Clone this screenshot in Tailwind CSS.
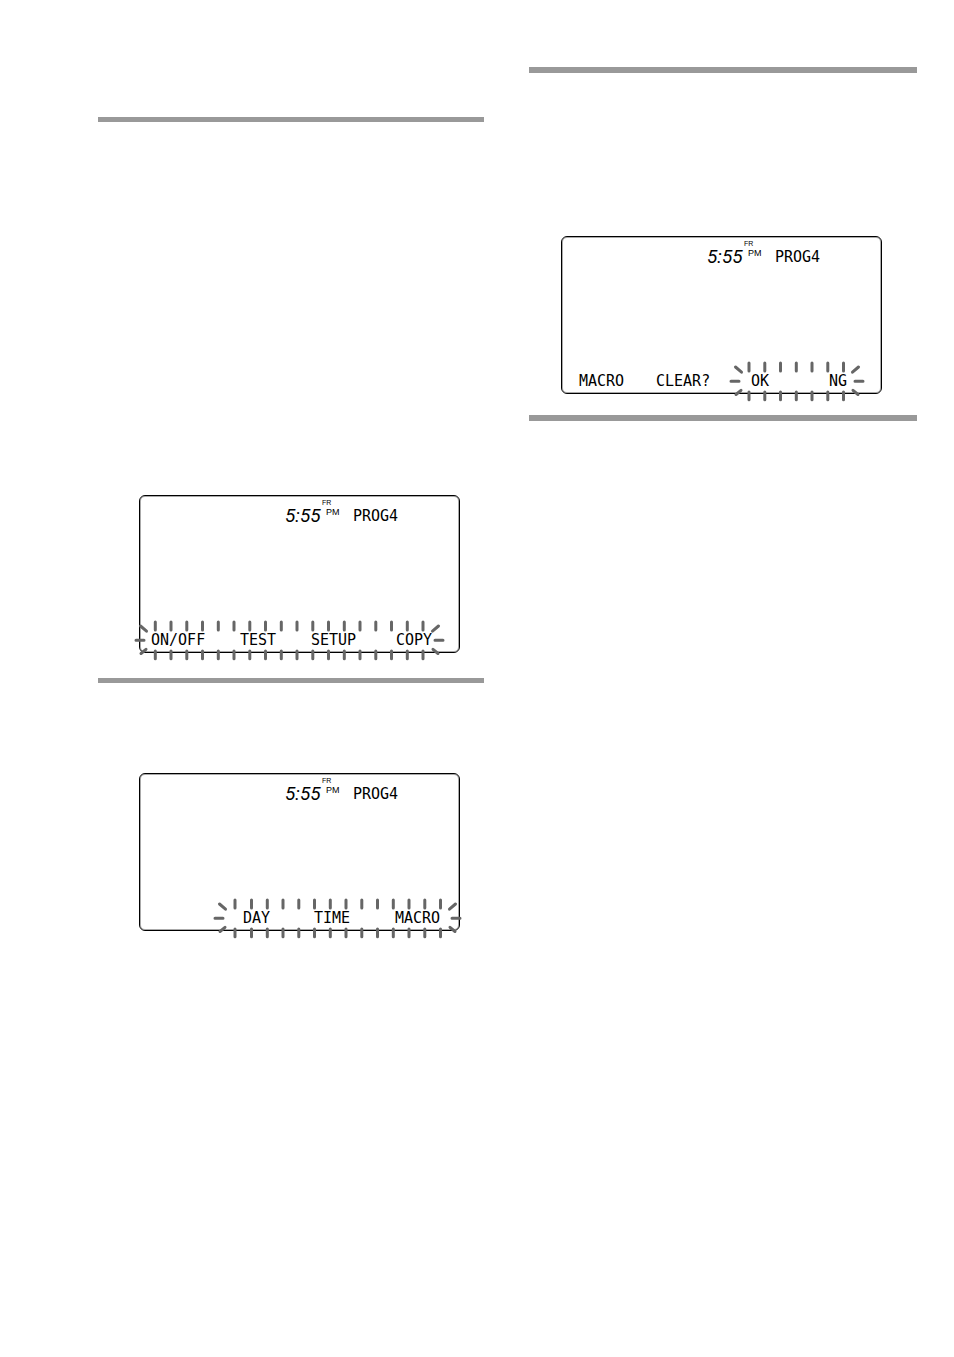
<!DOCTYPE html>
<html lang="en">
<head>
    <meta charset="UTF-8">
    <meta name="viewport" content="width=device-width, initial-scale=1.0">
    <title>Program Timer Displays</title>
    <script src="https://cdn.jsdelivr.net/npm/@tailwindcss/browser@4"></script>
</head>
<body class="min-h-screen bg-white text-black font-['DejaVu_Sans_Mono',monospace]">
    <!-- ray shapes around a flashing area -->
    <svg class="hidden">
        <defs>
            <g id="fan" stroke="#666" stroke-width="3" stroke-linecap="round">
                <path d="M7.5 10L13.5 15.2M3 24.3H11M8 37.5L13 33.3"/>
            </g>
            <path id="tick" d="M0 6V14M0 35V42.7" stroke="#666" stroke-width="3" stroke-linecap="round"/>
        </defs>
    </svg>

    <main class="grid grid-cols-[386fr_388fr] gap-[45px] pl-[98px] pr-[37px]">
        <div class="pt-[117px]">
            <hr class="h-[5px] border-0 bg-[#999]">

            <section class="relative mt-[373px] mr-6 ml-[41px] h-[158px] rounded-md border border-black inset-ring inset-ring-[#aaa]">
                <header class="flex items-start pl-[145px] pt-[7px]">
                    <time class="w-9 font-['Roboto',sans-serif] text-[19px] leading-[26px] italic">5:55</time>
                    <div class="w-8 font-['Liberation_Sans',sans-serif]">
                        <p class="-mt-1 pl-px text-[7px] leading-[8px]">FR</p>
                        <p class="pl-[5px] text-[9px] leading-[10px]">PM</p>
                    </div>
                    <span class="text-[15px] leading-[26px]">PROG4</span>
                </header>
                <div class="absolute bottom-0 left-[11px] flex h-6 items-center text-[15px] leading-6">
                    <button class="w-[89px] text-left">ON/OFF</button>
                    <button class="w-[71px] text-left">TEST</button>
                    <button class="w-[85px] text-left">SETUP</button>
                    <button>COPY</button>
                </div>
                <svg class="pointer-events-none absolute -bottom-3 -left-[7px]" width="314" height="48" viewBox="0 0 314 48" fill="none">
                    <use href="#fan"/>
                    <use href="#fan" transform="translate(313 0) scale(-1 1)"/>
                    <use href="#tick" x="22.3"/><use href="#tick" x="38"/><use href="#tick" x="53.8"/><use href="#tick" x="69.5"/><use href="#tick" x="85.3"/><use href="#tick" x="101"/>
                    <use href="#tick" x="116.8"/><use href="#tick" x="132.5"/><use href="#tick" x="148.3"/><use href="#tick" x="164"/><use href="#tick" x="179.8"/><use href="#tick" x="195.5"/>
                    <use href="#tick" x="211.3"/><use href="#tick" x="227"/><use href="#tick" x="242.8"/><use href="#tick" x="258.5"/><use href="#tick" x="274.3"/><use href="#tick" x="290"/>
                </svg>
            </section>

            <hr class="mt-[25px] h-[5px] border-0 bg-[#999]">

            <section class="relative mt-[90px] mr-6 ml-[41px] h-[158px] rounded-md border border-black inset-ring inset-ring-[#aaa]">
                <header class="flex items-start pl-[145px] pt-[7px]">
                    <time class="w-9 font-['Roboto',sans-serif] text-[19px] leading-[26px] italic">5:55</time>
                    <div class="w-8 font-['Liberation_Sans',sans-serif]">
                        <p class="-mt-1 pl-px text-[7px] leading-[8px]">FR</p>
                        <p class="pl-[5px] text-[9px] leading-[10px]">PM</p>
                    </div>
                    <span class="text-[15px] leading-[26px]">PROG4</span>
                </header>
                <div class="absolute bottom-0 left-[103px] flex h-6 items-center text-[15px] leading-6">
                    <button class="w-[71px] text-left">DAY</button>
                    <button class="w-[81px] text-left">TIME</button>
                    <button>MACRO</button>
                </div>
                <svg class="pointer-events-none absolute -bottom-3 left-[72px]" width="252" height="48" viewBox="0 0 252 48" fill="none">
                    <use href="#fan"/>
                    <use href="#fan" transform="translate(251 0) scale(-1 1)"/>
                    <use href="#tick" x="23"/><use href="#tick" x="39.5"/><use href="#tick" x="55.3"/><use href="#tick" x="71"/><use href="#tick" x="86.8"/><use href="#tick" x="102.5"/><use href="#tick" x="118.3"/>
                    <use href="#tick" x="134"/><use href="#tick" x="149.8"/><use href="#tick" x="165.5"/><use href="#tick" x="181.3"/><use href="#tick" x="197"/><use href="#tick" x="212.8"/><use href="#tick" x="228.5"/>
                </svg>
            </section>
        </div>

        <div class="pt-[67px]">
            <hr class="h-[6px] border-0 bg-[#999]">

            <section class="relative mt-[163px] mr-[35px] ml-8 h-[158px] rounded-md border border-black inset-ring inset-ring-[#aaa]">
                <header class="flex items-start pl-[145px] pt-[7px]">
                    <time class="w-9 font-['Roboto',sans-serif] text-[19px] leading-[26px] italic">5:55</time>
                    <div class="w-8 font-['Liberation_Sans',sans-serif]">
                        <p class="-mt-1 pl-px text-[7px] leading-[8px]">FR</p>
                        <p class="pl-[5px] text-[9px] leading-[10px]">PM</p>
                    </div>
                    <span class="text-[15px] leading-[26px]">PROG4</span>
                </header>
                <div class="absolute bottom-0 left-[17px] flex h-6 items-center text-[15px] leading-6">
                    <span class="w-[77px]">MACRO</span>
                    <span class="w-[95px]">CLEAR?</span>
                    <button class="w-[78px] text-left">OK</button>
                    <button>NG</button>
                </div>
                <svg class="pointer-events-none absolute -bottom-3 left-[166px]" width="140" height="48" viewBox="0 0 140 48" fill="none">
                    <use href="#fan"/>
                    <use href="#fan" transform="translate(138 0) scale(-1 1)"/>
                    <use href="#tick" x="21"/><use href="#tick" x="36.8"/><use href="#tick" x="52.5"/><use href="#tick" x="68.3"/><use href="#tick" x="84"/><use href="#tick" x="99.8"/><use href="#tick" x="115.5"/>
                </svg>
            </section>

            <hr class="mt-[21px] h-[6px] border-0 bg-[#999]">
        </div>
    </main>
</body>
</html>
